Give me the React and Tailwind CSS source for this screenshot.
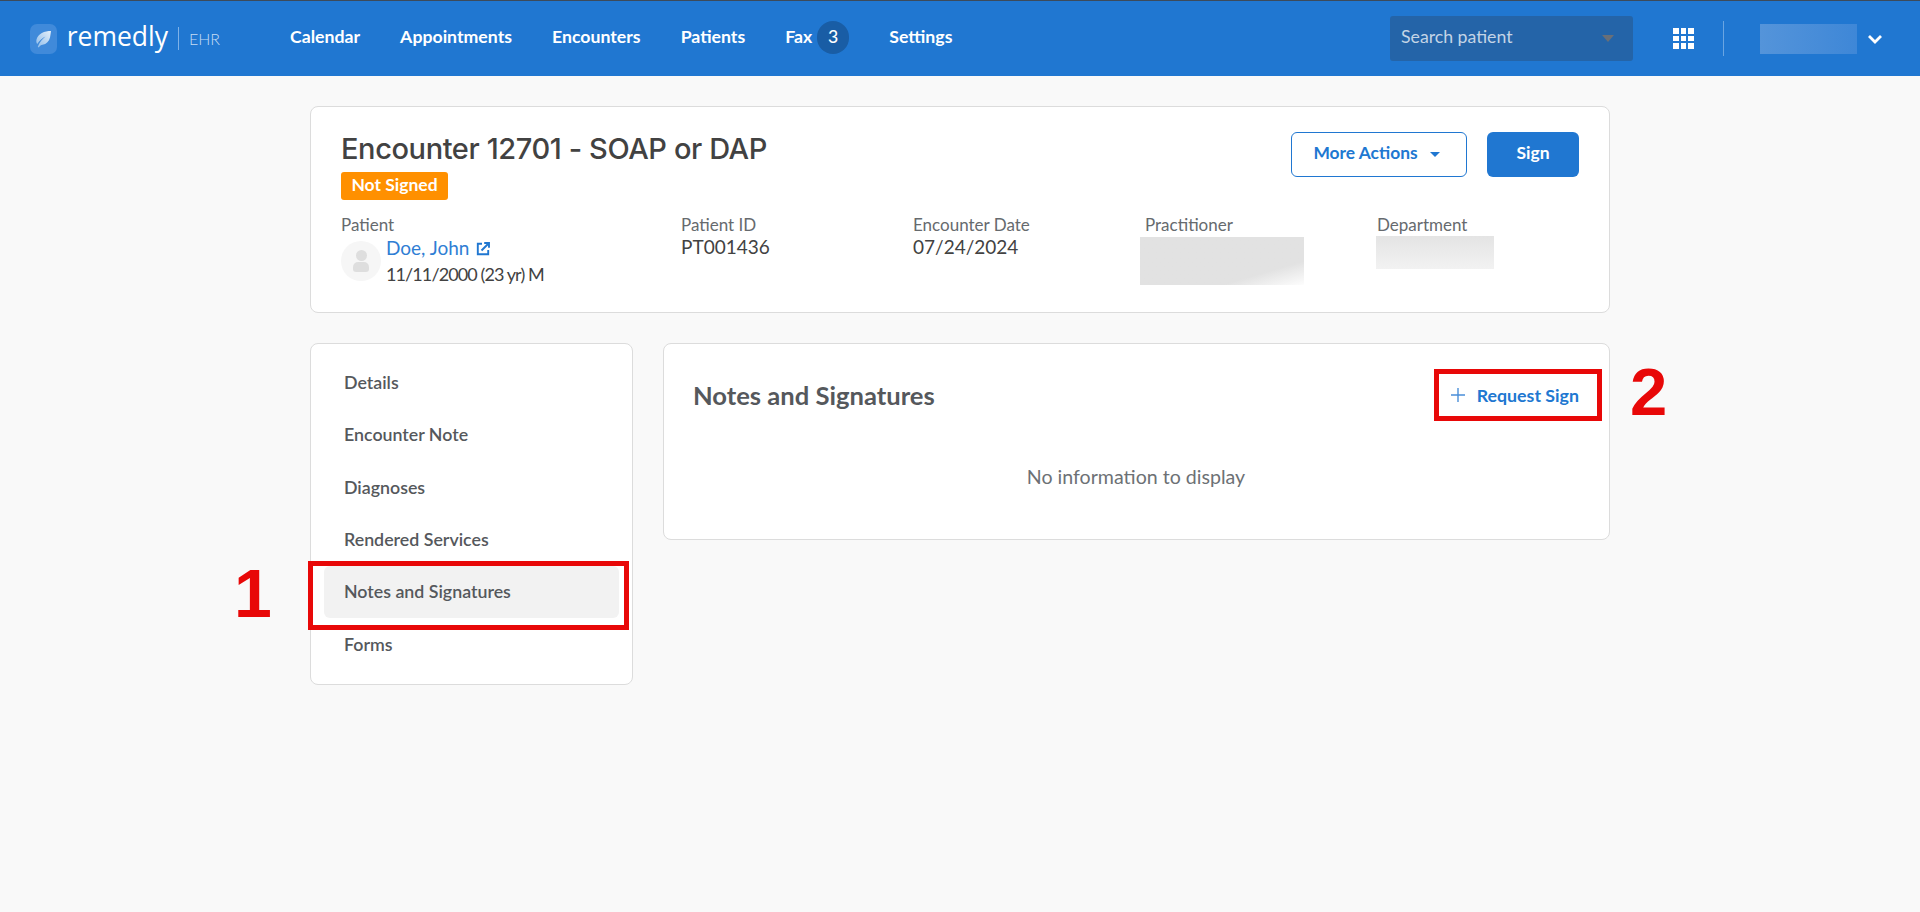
const font = "font-['Lato','Open_Sans',sans-serif]";

function Logo() {
  return (
    <div className="flex items-center w-[190px]">
      <div className="w-[29px] h-[30px] rounded-[7px] bg-[#408ada] flex items-center justify-center">
        <svg width="17" height="18" viewBox="0 0 17 18">
          <defs>
            <linearGradient id="leaf" x1="1" y1="0" x2="0" y2="1">
              <stop offset="0" stopColor="#e4effa" />
              <stop offset="1" stopColor="#8fbce9" />
            </linearGradient>
          </defs>
          <path d="M16 1C9.500 1 3 3.500 1.500 9.500c-.5 2 0 3.500.8 4.500C4.500 10.500 7.500 8 10.500 6.500 7.500 9 4.500 12 2.800 16.800l1 .7C5 15.500 6 15 7.500 14.800c4-.7 6.500-3.500 7.500-7.300.5-2 .7-4.500 1-6.500z" fill="url(#leaf)" />
        </svg>
      </div>
      <span className="ml-[10px] -mt-[4px] text-[26.500px] leading-none text-white font-normal font-['Open_Sans',sans-serif]">remedly</span>
      <div className="ml-[10px] w-px h-[23px] bg-[#7fb2e8]" />
      <span className="ml-[10px] text-[16px] leading-none text-[#c5dcf4] font-light">EHR</span>
    </div>
  );
}

function Grid() {
  return (
    <div className="grid grid-cols-3 gap-[2px] w-[21px]">
      {[0, 1, 2, 3, 4, 5, 6, 7, 8].map((i) => (
        <div key={i} className="w-[5.600px] h-[5.600px] bg-white" />
      ))}
    </div>
  );
}

function Header() {
  const nav = ["Calendar", "Appointments", "Encounters", "Patients"];
  return (
    <header className="h-[76px] bg-[#2077d1] border-t border-[#3c4a5a] flex items-center pl-[30px]">
      <Logo />
      <nav className="ml-[70px] flex items-center gap-[40px] text-[17.700px] font-bold text-white pb-[3px]">
        {nav.map((n) => (
          <span key={n}>{n}</span>
        ))}
        <span className="flex items-center gap-[5px]">
          Fax
          <span className="w-[32px] h-[33px] rounded-full bg-[#195da5] flex items-center justify-center font-medium">3</span>
        </span>
        <span>Settings</span>
      </nav>
      <div className="ml-auto flex items-center">
        <div className="w-[243px] h-[45px] rounded-[3px] bg-[#2464a8] flex items-center justify-between pl-[11px] pr-[19px]">
          <span className="text-[17.700px] text-[#c3d4e6] pb-[3px]">Search patient</span>
          <span className="w-0 h-0 border-x-[6.500px] border-x-transparent border-t-[7px] border-t-[#696f78]" />
        </div>
        <div className="ml-[40px]"><Grid /></div>
        <div className="ml-[29px] w-px h-[35px] bg-[#6aa5e2]" />
        <div className="ml-[36px] w-[97px] h-[30px] bg-gradient-to-r from-[#5494da] to-[#3e87d7]" />
        <svg className="ml-[10px] mr-[37px]" width="16" height="10" viewBox="0 0 16 10">
          <path d="M2 2l6 6 6-6" fill="none" stroke="#fff" strokeWidth="2.800" />
        </svg>
      </div>
    </header>
  );
}

function Field({ label, className, children }) {
  return (
    <div className={className}>
      <div className="text-[17px] leading-[20px] text-[#666a6e]">{label}</div>
      {children}
    </div>
  );
}

function EncounterCard() {
  return (
    <section className="h-[207px] bg-white border border-[#dcdcdc] rounded-[8px] pl-[30px] pr-[30px] pt-[22px]">
      <div className="flex justify-between items-start">
        <div>
          <h1 className="text-[29px] leading-[40px] font-medium text-[#424242] font-['Inter',sans-serif] tracking-[-0.4px]">Encounter 12701 - SOAP or DAP</h1>
          <div className="mt-[3px] w-[107px] h-[28px] rounded-[3px] bg-[#ff9000] text-white font-bold text-[17.500px] flex items-center justify-center pb-[1px]">Not Signed</div>
        </div>
        <div className="flex gap-[20px] mt-[3px]">
          <button className="w-[176px] h-[45px] rounded-[6px] border border-[#2077d1] text-[#2077d1] font-bold text-[17.400px] flex items-center justify-center gap-[12px] pb-[2px] pr-[5px]">
            More Actions
            <span className="w-0 h-0 mt-[2px] border-x-[5.500px] border-x-transparent border-t-[5px] border-t-[#2077d1]" />
          </button>
          <button className="w-[92px] h-[45px] rounded-[6px] bg-[#2077d1] text-white font-bold text-[17.500px] pb-[2px]">Sign</button>
        </div>
      </div>
      <div className="flex mt-[15px] relative">
        <Field label="Patient" className="w-[340px]">
          <div className="flex mt-[6px] items-start">
            <div className="w-[40px] h-[40px] rounded-full bg-[#f6f6f6] flex flex-col items-center justify-center">
              <div className="w-[11px] h-[11px] rounded-full bg-[#dedede]" />
              <div className="w-[16px] h-[10px] mt-[1px] rounded-t-[5px] rounded-b-[3px] bg-[#dedede]" />
            </div>
            <div className="ml-[5px] -mt-[5px]">
              <div className="flex items-center text-[19px] leading-[24px] text-[#2f7ed4]">
                Doe, John
                <svg className="ml-[7px] mt-[2px]" width="14" height="14" viewBox="0 0 14 14" fill="none" stroke="#2077d1" strokeWidth="1.900">
                  <path d="M6 1.800H1.800v10.400h10.400V8" />
                  <path d="M5.500 8.500 12.500 1.500M8.200 1h4.800v4.800" />
                </svg>
              </div>
              <div className="text-[18px] leading-[28px] tracking-[-0.9px] text-[#424242]">11/11/2000 (23 yr) M</div>
            </div>
          </div>
        </Field>
        <Field label="Patient ID" className="w-[232px]">
          <div className="text-[19px] leading-[24px] text-[#424242]">PT001436</div>
        </Field>
        <Field label="Encounter Date" className="w-[232px]">
          <div className="text-[19px] leading-[24px] text-[#424242]">07/24/2024</div>
        </Field>
        <Field label="Practitioner" className="w-[232px]">
          <div className="-ml-[5px] mt-[2px] w-[164px] h-[48px] bg-gradient-to-br from-[#e2e2e2] via-[#e2e2e2] via-75% to-[#fdfdfd]" />
        </Field>
        <Field label="Department">
          <div className="-ml-[1px] mt-[1px] w-[118px] h-[33px] bg-gradient-to-b from-[#e4e4e4] to-[#f2f2f2]" />
        </Field>
      </div>
    </section>
  );
}

function Sidebar() {
  const items = ["Details", "Encounter Note", "Diagnoses", "Rendered Services", "Notes and Signatures", "Forms"];
  return (
    <aside className="w-[323px] h-[342px] bg-white border border-[#dcdcdc] rounded-[8px] px-[13px] pt-[12px]">
      {items.map((t) => (
        <div
          key={t}
          className={`h-[52.400px] flex items-center pl-[20px] rounded-[6px] text-[17.800px] font-semibold text-[#55585c] ${t === "Notes and Signatures" ? "bg-[#f2f2f2]" : ""}`}
        >
          {t}
        </div>
      ))}
    </aside>
  );
}

function Main() {
  return (
    <section className="flex-1 h-[197px] bg-white border border-[#dcdcdc] rounded-[8px] pl-[29px] pr-[30px]">
      <div className="flex items-center justify-between h-[102px]">
        <h2 className="text-[25.600px] font-bold text-[#55585c]">Notes and Signatures</h2>
        <div className="flex items-center gap-[12px] text-[#2077d1] font-bold text-[17.800px]">
          <svg width="14" height="14" viewBox="0 0 14 14" stroke="#4a8fd9" strokeWidth="1.400">
            <path d="M7 0v14M0 7h14" />
          </svg>
          Request Sign
        </div>
      </div>
      <div className="text-center text-[19.600px] leading-[24px] text-[#6d7175] mt-[19px]">No information to display</div>
    </section>
  );
}

export default function App() {
  return (
    <div className={`relative min-h-[912px] bg-[#f9f9f9] ${font}`}>
      <Header />
      <main className="w-[1300px] mx-auto pt-[30px]">
        <EncounterCard />
        <div className="flex gap-[30px] mt-[30px]">
          <Sidebar />
          <Main />
        </div>
      </main>
      <div className="absolute left-[308px] top-[561px] w-[321px] h-[69px] border-[5px] border-[#e80808]" />
      <div className="absolute left-[1434px] top-[369px] w-[168px] h-[52px] border-[5px] border-[#e80808]" />
      <div className="absolute left-[234px] top-[559px] text-[68px] leading-[68px] font-bold text-[#e80808] font-['Liberation_Sans',sans-serif]">1</div>
      <div className="absolute left-[1630px] top-[358px] text-[67px] leading-[67px] font-bold text-[#e80808] font-['Liberation_Sans',sans-serif]">2</div>
    </div>
  );
}
